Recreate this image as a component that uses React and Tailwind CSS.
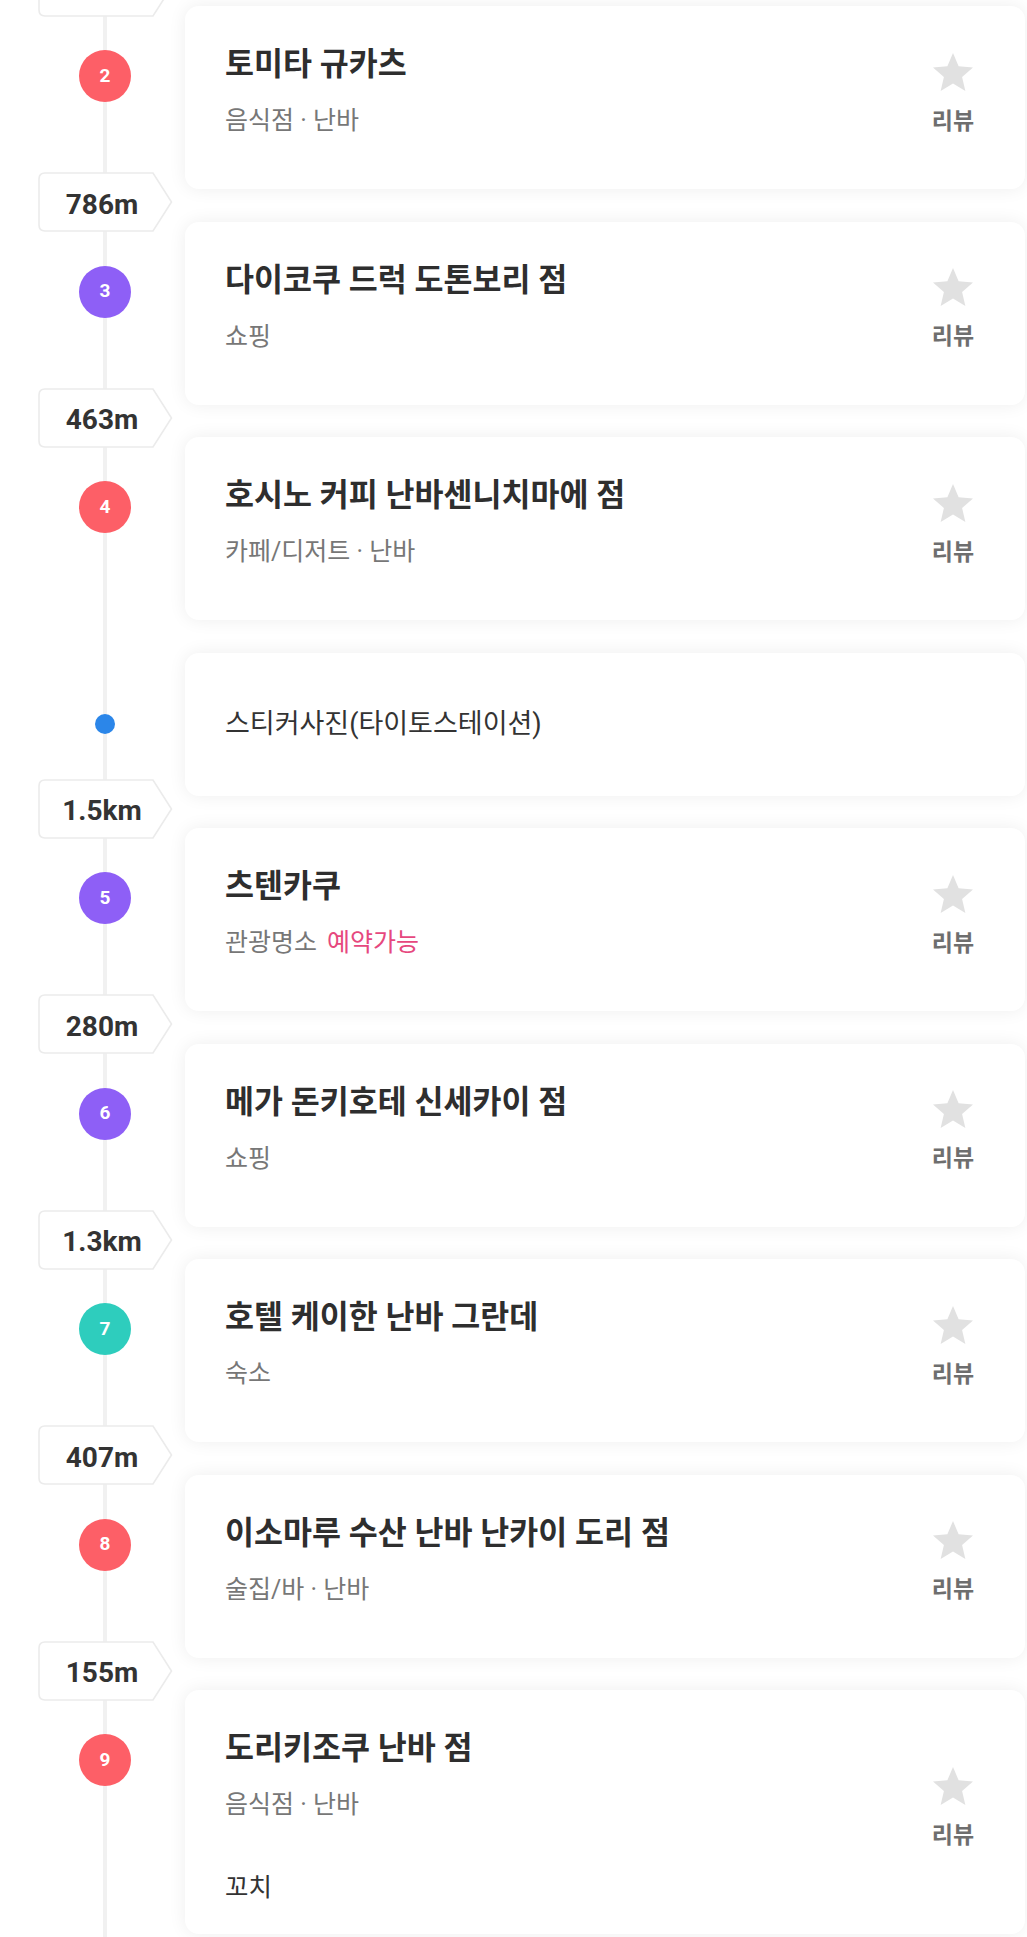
import React from "react";

const FONT = { fontFamily: '"Roboto", "Noto Sans CJK KR", sans-serif' };

const COLORS = {
  red: "bg-[#fd5f67]",
  purple: "bg-[#8e5ff6]",
  teal: "bg-[#2ecdbd]",
};

function Star() {
  return (
    <svg width="48" height="48" viewBox="0 0 24 24" className="block">
      <path
        fill="#e1e1e1"
        d="M12 17.27L18.18 21l-1.64-7.03L22 9.24l-7.19-.61L12 2 9.19 8.63 2 9.24l5.46 4.73L5.82 21z"
      />
    </svg>
  );
}

function Badge({ text }) {
  return (
    <div className="h-[32.5px] flex items-center">
      <div className="relative z-10 ml-[38px] mt-[-6px] w-[135px] h-[60px] shrink-0 flex items-center justify-center pr-[7px] pt-[5px]">
        <svg width="135" height="60" viewBox="0 0 135 60" className="absolute inset-0">
          <path
            d="M7 1 H115 L133.5 30 L115 59 H7 Q1 59 1 53 V7 Q1 1 7 1 Z"
            fill="#ffffff"
            stroke="#ebebeb"
            strokeWidth="1.6"
          />
        </svg>
        <span className="relative text-[28px] font-bold text-[#333333] leading-none">{text}</span>
      </div>
    </div>
  );
}

function Gap() {
  return <div className="h-[32.5px]" />;
}

function Stop({ n, color, title, sub, extra, memo, tall }) {
  return (
    <div className="flex">
      <div className="w-[185px] shrink-0">
        <div
          className={`relative z-10 ml-[79px] mt-[44px] w-[52px] h-[52px] rounded-full ${COLORS[color]} flex items-center justify-center text-white text-[19px] font-bold`}
        >
          {n}
        </div>
      </div>
      <div
        className={`flex-1 ${tall ? "h-[244px]" : "h-[183px]"} rounded-[14px] bg-white shadow-[0_0_18px_rgba(0,0,0,0.07)] flex justify-between`}
      >
        <div className="pl-[40px] pt-[38px] flex flex-col">
          <div className="text-[31.5px] leading-[42px] font-bold text-[#2e2e2e]">{title}</div>
          <div className="mt-[18px] text-[25px] leading-[34px] text-[#777777]">
            {sub}
            {extra && <span className="ml-[10px] text-[#e6487e]">{extra}</span>}
          </div>
          {memo && <div className="mt-[48px] text-[25.5px] leading-[34px] text-[#333333]">{memo}</div>}
        </div>
        <div className="pr-[48px] flex flex-col items-center justify-center pb-[11px]">
          <Star />
          <div className="mt-[11px] text-[23px] leading-[28px] font-bold text-[#6e6e6e]">리뷰</div>
        </div>
      </div>
    </div>
  );
}

function Sticker({ text }) {
  return (
    <div className="flex items-center">
      <div className="w-[185px] shrink-0">
        <div className="relative z-10 ml-[95px] w-[20px] h-[20px] rounded-full bg-[#2b86e9]" />
      </div>
      <div className="flex-1 h-[143px] rounded-[14px] bg-white shadow-[0_0_18px_rgba(0,0,0,0.07)] flex items-center pl-[40px]">
        <span className="text-[27px] text-[#333333]">{text}</span>
      </div>
    </div>
  );
}

export default function App() {
  return (
    <div className="relative w-[1027px] h-[1937px] overflow-hidden bg-white" style={FONT}>
      <div className="absolute left-[103px] top-0 bottom-0 w-[4px] bg-[#f1f1f1]" />
      <div className="flex flex-col mt-[-26.5px] pr-[2px]">
        <Badge text="350m" />
        <Stop n="2" color="red" title="토미타 규카츠" sub="음식점 · 난바" />
        <Badge text="786m" />
        <Stop n="3" color="purple" title="다이코쿠 드럭 도톤보리 점" sub="쇼핑" />
        <Badge text="463m" />
        <Stop n="4" color="red" title="호시노 커피 난바센니치마에 점" sub="카페/디저트 · 난바" />
        <Gap />
        <Sticker text="스티커사진(타이토스테이션)" />
        <Badge text="1.5km" />
        <Stop n="5" color="purple" title="츠텐카쿠" sub="관광명소" extra="예약가능" />
        <Badge text="280m" />
        <Stop n="6" color="purple" title="메가 돈키호테 신세카이 점" sub="쇼핑" />
        <Badge text="1.3km" />
        <Stop n="7" color="teal" title="호텔 케이한 난바 그란데" sub="숙소" />
        <Badge text="407m" />
        <Stop n="8" color="red" title="이소마루 수산 난바 난카이 도리 점" sub="술집/바 · 난바" />
        <Badge text="155m" />
        <Stop n="9" color="red" title="도리키조쿠 난바 점" sub="음식점 · 난바" memo="꼬치" tall />
      </div>
    </div>
  );
}
